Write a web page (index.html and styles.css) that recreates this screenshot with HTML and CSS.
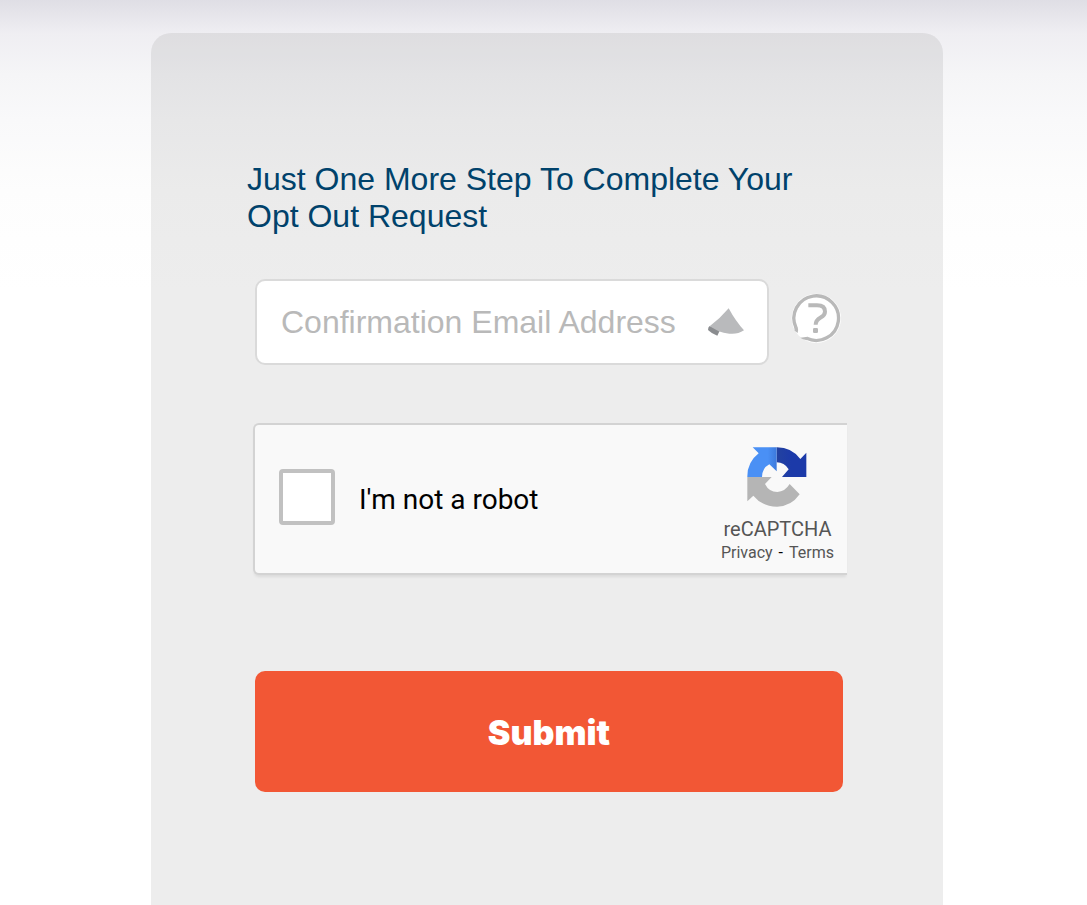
FILE: index.html
```html
<!DOCTYPE html>
<html lang="en">
<head>
<meta charset="utf-8">
<meta name="viewport" content="width=device-width, initial-scale=1">
<title>Opt Out Request</title>
<link rel="stylesheet" href="styles.css">
</head>
<body class="page">
<main class="card">
  <h1 class="title">Just One More Step To Complete Your Opt Out Request</h1>
  <form class="form">
    <div class="email-row">
      <div class="email-field">
        <input class="email-input" type="email" aria-label="Confirmation Email Address" placeholder="Confirmation Email Address">
        <svg class="field-icon" viewBox="0 0 108 84" aria-hidden="true">
          <path fill="#8a8c8f" d="M5 54L36 66L28 83Q12 78 0 66Q0 57 5 54Z"/>
          <path fill="#b9babc" d="M62 1Q83 40 108 67Q88 80 64 77Q46 76 32 70L5 55Q36 32 62 1Z"/>
        </svg>
      </div>
      <button class="help" type="button" aria-label="Help">
        <svg class="help-icon" viewBox="0 0 150 150" aria-hidden="true">
          <circle cx="76" cy="76" r="74" fill="#fff"/>
          <path fill="none" stroke="#b9b9b9" stroke-width="10" d="M15 104A67 67 0 1 1 47 136"/>
          <path fill="#b9b9b9" d="M10 103L20 102Q23 112 20 120L11 113ZM28 134L50 131L48 142L36 139Z"/>
          <path fill="none" stroke="#b9b9b9" stroke-width="12" d="M52 37H78C95 37 102 43 102 56C102 77 74 70 74 95"/>
          <rect x="66" y="105" width="15" height="15" rx="4" fill="#b9b9b9"/>
        </svg>
      </button>
    </div>
    <div class="captcha">
      <input class="captcha-box" type="checkbox" id="robot">
      <label class="captcha-label" for="robot">I'm not a robot</label>
      <div class="brand">
        <svg class="brand-logo" viewBox="0 0 180 180" aria-hidden="true">
          <defs>
            <linearGradient id="sky"><stop offset="0" stop-color="#4a90f5"/><stop offset=".7" stop-color="#4a90f5"/><stop offset="1" stop-color="#3c79dc"/></linearGradient>
            <linearGradient id="navy"><stop offset="0" stop-color="#2342a0"/><stop offset=".5" stop-color="#1c3aa9"/></linearGradient>
          </defs>
          <path fill="url(#navy)" d="M89 1A88 88 0 0 1 160 36L178 17V90H105L125 67Q112 46 89 46Z"/>
          <path fill="url(#sky)" d="M17 1H89V73L67 52Q45 64 45 90H1A88 88 0 0 1 35 19Z"/>
          <path fill="#b5b5b5" d="M1 90H74L54 111Q66 135 91 135Q114 134 128 111L158 142Q132 179 90 179Q46 179 19 146L1 163Z"/>
        </svg>
        <span class="brand-name">reCAPTCHA</span>
        <span class="brand-links"><a href="#privacy">Privacy</a><span class="dash">-</span><a href="#terms">Terms</a></span>
      </div>
    </div>
    <button class="submit" type="submit">Submit</button>
  </form>
</main>
</body>
</html>
```
FILE: styles.css
```css
* { box-sizing: border-box; }

.page {
  display: flex;
  min-height: 100vh;
  margin: 0;
  padding: 33px 144px 0 151px;
  background: #fff linear-gradient(#dfdee5 0, #efeef2 33px, #f5f5f7 75px, #f9f9fa 120px, #fdfdfd 190px, #fff 290px) no-repeat;
  font-family: "Liberation Sans", Arial, sans-serif;
}

.card {
  flex: 1;
  padding: 128px 96px 64px;
  border-radius: 20px 20px 0 0;
  background: rgba(2, 2, 2, 0.07);
}

.title {
  margin: 0 0 44px;
  color: #00426b;
  font-size: 32px;
  font-weight: 400;
  line-height: 37px;
}

.form {
  display: flex;
  flex-direction: column;
  padding: 0 4px 0 8px;
}

.email-row {
  display: flex;
  align-items: flex-start;
  gap: 22px;
  padding-right: 2px;
}

.email-field {
  display: flex;
  flex: 1;
  align-items: center;
  height: 86px;
  padding: 0 23px 0 24px;
  border: 2px solid #dadada;
  border-radius: 10px;
  background: #fff;
}

.email-input {
  flex: 1;
  min-width: 0;
  padding: 0;
  border: 0;
  outline: 0;
  background: transparent;
  font: 32px "Liberation Sans", Arial, sans-serif;
}

.email-input::placeholder { color: #b9b9b9; }

.field-icon { width: 36px; height: 28px; }

.help {
  display: flex;
  margin-top: 14px;
  padding: 0;
  border: 0;
  background: none;
}

.help-icon { width: 50px; height: 50px; }

.captcha {
  display: flex;
  align-items: center;
  height: 152px;
  margin: 58px -4px 0 -2px;
  padding: 0 13px 0 24px;
  border: 2px solid #d3d3d3;
  border-right: 0;
  border-radius: 6px 0 0 6px;
  background: #f9f9f9;
  box-shadow: 0 3px 3px -1px rgba(0, 0, 0, 0.08);
  font-family: Roboto, sans-serif;
}

.captcha-box {
  width: 56px;
  height: 56px;
  margin: 0 24px 4px 0;
  appearance: none;
  border: 4px solid #c1c1c1;
  border-radius: 4px;
  background: #fff;
}

.captcha-label {
  flex: 1;
  color: #000;
  font-size: 28px;
}

.brand {
  display: flex;
  flex-direction: column;
  align-items: center;
  align-self: flex-start;
  padding-top: 22px;
  color: #555;
}

.brand-logo { width: 60px; height: 60px; }

.brand-name {
  margin-top: 10px;
  font-size: 20px;
  line-height: 24px;
}

.brand-links {
  display: flex;
  gap: 6px;
  font-size: 16px;
  line-height: 24px;
}

.brand-links a { color: inherit; text-decoration: none; }

.dash { color: #000; }

.submit {
  height: 121px;
  margin-top: 96px;
  padding-top: 2px;
  border: 0;
  border-radius: 10px;
  background: #f25735;
  color: #fff;
  font: 900 34px "Arial Black", Inter, sans-serif;
}
```
